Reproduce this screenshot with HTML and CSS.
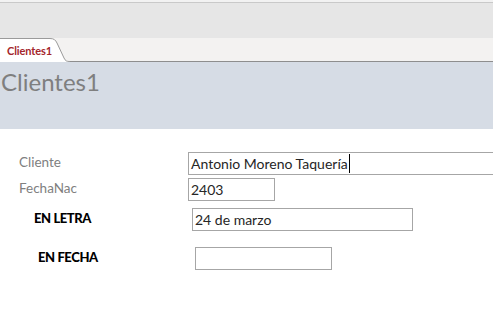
FILE: index.html
```html
<!DOCTYPE html>
<html>
<head>
<meta charset="utf-8">
<link rel="stylesheet" href="styles.css">
</head>
<body>
<div class="app">
  <div class="ribbon"></div>
  <div class="tabstrip">
    <div class="tab">
      <svg class="tab-shape" width="70" height="24" viewBox="0 0 70 24">
        <path d="M0 0.5 H50 C54 0.5 55.5 2 57 5 L64 20 C65.5 23 66.5 23.5 70 23.5 V24 H0 Z" fill="#ffffff"/>
        <path d="M0 0.5 H50 C54 0.5 55.5 2 57 5 L64 20 C65.5 23 66.5 23.5 70 23.5" fill="none" stroke="#9a9a9a" stroke-width="1"/>
      </svg>
      <span class="tab-label">Clientes1</span>
    </div>
    <div class="tab-fill"></div>
  </div>
  <div class="header"><span class="title">Clientes1</span></div>
  <div class="form">
    <div class="row row-cliente">
      <span class="label">Cliente</span>
      <div class="field field-cliente"><span>Antonio Moreno Taquería</span><span class="caret"></span></div>
    </div>
    <div class="row row-fecha">
      <span class="label">FechaNac</span>
      <div class="field field-fecha"><span>2403</span></div>
    </div>
    <div class="row row-letra">
      <span class="label bold">EN LETRA</span>
      <div class="field field-letra"><span>24 de marzo</span></div>
    </div>
    <div class="row row-enfecha">
      <span class="label bold">EN FECHA</span>
      <div class="field field-enfecha"></div>
    </div>
  </div>
</div>
</body>
</html>
```
FILE: styles.css
```css
html, body {
  margin: 0;
  padding: 0;
  background: #ffffff;
}
.app {
  width: 493px;
  height: 334px;
  overflow: hidden;
  font-family: Lato, "Liberation Sans", sans-serif;
}
.ribbon {
  height: 38px;
  box-sizing: border-box;
  background: #e6e6e6;
  border-top: 2px solid #f2f2f2;
  box-shadow: inset 0 1px 0 #c9c9c9;
}
.tabstrip {
  display: flex;
  height: 24px;
  background: #f3f2f1;
}
.tab {
  position: relative;
  width: 70px;
  height: 24px;
  flex: none;
}
.tab-shape {
  position: absolute;
  left: 0;
  top: 0;
}
.tab-label {
  position: relative;
  display: block;
  padding: 6px 0 0 7px;
  font-size: 11px;
  font-weight: bold;
  color: #a4262c;
  letter-spacing: -0.1px;
}
.tab-fill {
  flex: 1;
  border-bottom: 1px solid #8e8e8e;
}
.header {
  height: 67px;
  background: #d6dce5;
  box-sizing: border-box;
  padding-top: 4px;
}
.title {
  display: block;
  padding-left: 1px;
  font-size: 24px;
  color: #7f7f7f;
  line-height: 32px;
}
.form {
  padding-top: 23px;
}
.row {
  display: flex;
  align-items: center;
  height: 23px;
}
.label {
  flex: none;
  box-sizing: border-box;
  font-size: 13.5px;
  color: #808080;
  margin-bottom: 3px;
}
.label.bold {
  font-weight: 900;
  color: #000000;
  font-size: 13px;
  letter-spacing: -0.4px;
  margin-bottom: 4px;
}
.field {
  box-sizing: border-box;
  height: 23px;
  border: 1px solid #a6a6a6;
  display: flex;
  align-items: center;
  padding-left: 2px;
  font-size: 14px;
  color: #262626;
  flex: none;
}
.caret {
  width: 1px;
  height: 19px;
  background: #000000;
  margin-left: 1px;
}
.row-cliente .label { width: 188px; padding-left: 19px; }
.field-cliente { width: 320px; }
.row-fecha { margin-top: 3px; }
.row-fecha .label { width: 188px; padding-left: 19px; }
.field-fecha { width: 87px; }
.row-letra { margin-top: 7px; }
.row-letra .label { width: 192px; padding-left: 34px; }
.field-letra { width: 221px; padding-left: 2px; }
.row-enfecha { margin-top: 16px; }
.row-enfecha .label { width: 195px; padding-left: 38px; }
.field-enfecha { width: 137px; }
```
